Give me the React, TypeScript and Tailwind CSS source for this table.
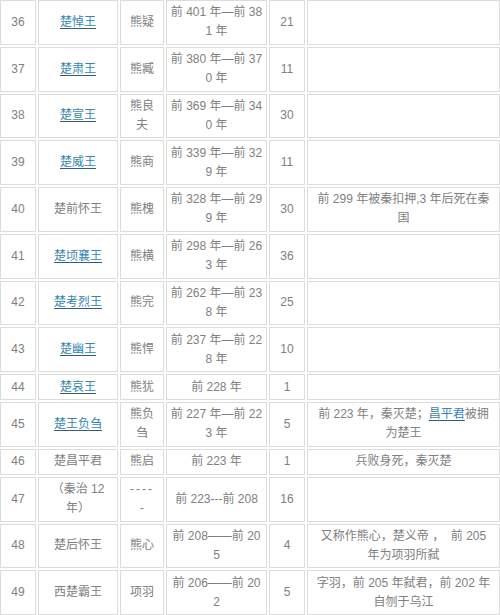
import React from "react";

type Cell = React.ReactNode;
type Row = { h: "t" | "s"; c: Cell[] };

const L = ({ children }: { children: React.ReactNode }) => (
  <span className="text-[#3686ad] underline decoration-[#3a5a70] underline-offset-2">{children}</span>
);

const two = (a: React.ReactNode, b: React.ReactNode) => (
  <>
    {a}
    <br />
    {b}
  </>
);

const rows: Row[] = [
  { h: "t", c: ["36", <L>楚悼王</L>, "熊疑", two("前 401 年—前 38", "1 年"), "21", ""] },
  { h: "t", c: ["37", <L>楚肃王</L>, "熊臧", two("前 380 年—前 37", "0 年"), "11", ""] },
  { h: "t", c: ["38", <L>楚宣王</L>, two("熊良", "夫"), two("前 369 年—前 34", "0 年"), "30", ""] },
  { h: "t", c: ["39", <L>楚威王</L>, "熊商", two("前 339 年—前 32", "9 年"), "11", ""] },
  {
    h: "t",
    c: ["40", "楚前怀王", "熊槐", two("前 328 年—前 29", "9 年"), "30", two("前 299 年被秦扣押,3 年后死在秦", "国")],
  },
  { h: "t", c: ["41", <L>楚顷襄王</L>, "熊横", two("前 298 年—前 26", "3 年"), "36", ""] },
  { h: "t", c: ["42", <L>楚考烈王</L>, "熊完", two("前 262 年—前 23", "8 年"), "25", ""] },
  { h: "t", c: ["43", <L>楚幽王</L>, "熊悍", two("前 237 年—前 22", "8 年"), "10", ""] },
  { h: "s", c: ["44", <L>楚哀王</L>, "熊犹", "前 228 年", "1", ""] },
  {
    h: "t",
    c: [
      "45",
      <L>楚王负刍</L>,
      two("熊负", "刍"),
      two("前 227 年—前 22", "3 年"),
      "5",
      two(
        <>
          前 223 年，秦灭楚；<L>昌平君</L>被拥
        </>,
        "为楚王"
      ),
    ],
  },
  { h: "s", c: ["46", "楚昌平君", "熊启", "前 223 年", "1", "兵败身死，秦灭楚"] },
  {
    h: "t",
    c: ["47", two("（秦治 12", "年）"), two(<span className="tracking-[2px]">----</span>, "-"), "前 223---前 208", "16", ""],
  },
  {
    h: "t",
    c: ["48", "楚后怀王", "熊心", two("前 208——前 20", "5"), "4", two("又称作熊心，楚义帝 ，  前 205", "年为项羽所弑")],
  },
  {
    h: "t",
    c: ["49", "西楚霸王", "项羽", two("前 206——前 20", "2"), "5", two("字羽，前 205 年弑君，前 202 年", "自刎于乌江")],
  },
];

export default function App() {
  return (
    <div className="w-[500px] h-[615px] overflow-hidden bg-white font-['Liberation_Sans','Noto_Sans_CJK_SC',sans-serif] text-[12px] leading-[19px] text-[#808080]">
      <div className="grid grid-cols-[36px_80px_44px_101px_36px_193px] gap-[2px]">
        {rows.map((r, i) =>
          r.c.map((cell, j) => (
            <div
              key={`${i}-${j}`}
              className={`${r.h === "t" ? "h-[44.75px]" : "h-[26px]"} border border-[#dcdcdc] flex items-center justify-center text-center whitespace-pre px-[2px]`}
            >
              <div>{cell}</div>
            </div>
          ))
        )}
      </div>
    </div>
  );
}
